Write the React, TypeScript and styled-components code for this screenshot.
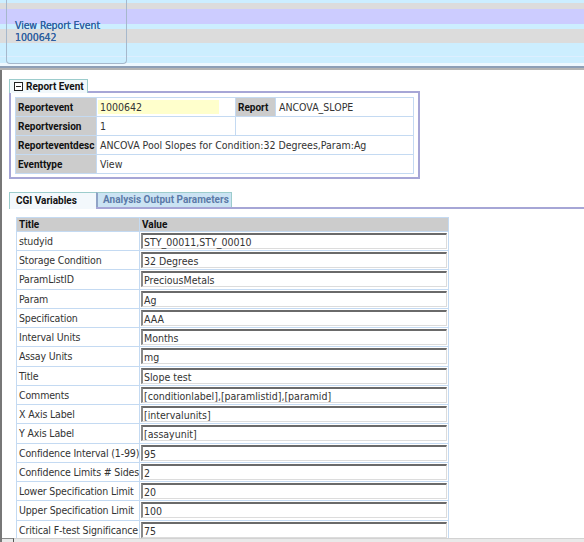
import React from 'react';
import styled, { createGlobalStyle, css } from 'styled-components';

const GlobalStyle = createGlobalStyle`
  html, body {
    margin: 0;
    padding: 0;
    background: #ffffff;
  }
  body {
    font-family: "DejaVu Sans Condensed", "DejaVu Sans", sans-serif;
    font-size: 10.5px;
    color: #333333;
  }
  * {
    box-sizing: border-box;
  }
`;

const LAVENDER = '#a6a6d6';
const TEAL = '#9ccccc';
const GRIDLINE = '#c4daf2';

// narrower bold face, close to the Tahoma Bold labels
const strong = css`
  font-family: Roboto, "DejaVu Sans Condensed", sans-serif;
  font-weight: bold;
  font-size: 10px;
  white-space: nowrap;
`;

const Page = styled.div`
  width: 584px;
  height: 542px;
  overflow: hidden;
  display: flex;
  flex-direction: column;
`;

const BannerFrame = styled.div`
  flex: none;
  border-bottom: 2px solid #b4b4b4;
`;

const Banner = styled.div`
  height: 68px;
  padding-left: 6px;
  border-bottom: 2px solid #8d9fb7;
  background: linear-gradient(
    to bottom,
    #cceeff 0 3px,
    #dcdcdc 3px 9px,
    #ccccff 9px 24px,
    #cceeff 24px 29px,
    #dcdcdc 29px 43px,
    #cceeff 43px 56px,
    #ddeeff 56px 57px,
    #cceeff 57px 63px,
    #eef8ff 63px 66px
  );
`;

const BannerBox = styled.div`
  width: 121px;
  height: 64px;
  padding: 19px 0 0 8px;
  border: 1px solid #a6b8cc;
  border-top: none;
  border-radius: 0 0 4px 4px;
  color: #2f5f9f;
  line-height: 12px;
  letter-spacing: -0.1px;
  text-shadow: 0 0 0.4px #2f5f9f;
`;

const Main = styled.div`
  flex: 1;
  min-height: 0;
  display: flex;
  flex-direction: column;
  border-left: 2px solid #777777;
`;

const Content = styled.div`
  flex: 1;
  min-height: 0;
  overflow: hidden;
  padding: 9px 0 0 7px;
`;

const Panel = styled.div`
  width: 411px;
`;

const TabRow = styled.div`
  display: flex;
  height: 14px;
`;

const SectionTab = styled.div`
  ${strong};
  display: flex;
  align-items: center;
  gap: 3px;
  width: 79px;
  padding-left: 4px;
  border: 1px solid ${TEAL};
  border-bottom: none;
  background: #f1f8fb;
  color: #111111;
`;

const CollapseIcon = styled.span`
  position: relative;
  flex: none;
  width: 9px;
  height: 9px;
  border: 1px solid #222222;
  background: #ffffff;
  &::after {
    content: '';
    position: absolute;
    left: 1px;
    right: 1px;
    top: 3px;
    height: 1px;
    background: #222222;
  }
`;

const TabRule = styled.div`
  flex: 1;
  border-bottom: 2px solid ${LAVENDER};
`;

const PanelBody = styled.div`
  border: 2px solid ${LAVENDER};
  border-top: none;
  padding: 4px 4px 3px 4px;
`;

const InfoGrid = styled.div`
  display: grid;
  grid-template-columns: 80px 138px 39px 1fr;
  grid-auto-rows: 18px;
  gap: 1px;
  background: ${GRIDLINE};
  border: 1px solid ${GRIDLINE};
`;

const InfoLabel = styled.div`
  ${strong};
  display: flex;
  align-items: center;
  padding-left: 2px;
  background: #cccccc;
  color: #111111;
`;

const InfoValue = styled.div<{ $span?: number }>`
  display: flex;
  align-items: center;
  padding-left: 3px;
  background: #ffffff;
  white-space: nowrap;
  grid-column: span ${(p) => p.$span ?? 1};
`;

const YellowField = styled.div`
  width: 121px;
  height: 14px;
  margin-left: -2px;
  padding-left: 2px;
  background: #ffffcc;
  line-height: 14px;
`;

const Variables = styled.div`
  margin-top: 13px;
`;

const TabStrip = styled.div`
  display: flex;
  align-items: flex-end;
  height: 17px;
  border-bottom: 2px solid ${LAVENDER};
`;

const ActiveTab = styled.div`
  ${strong};
  position: relative;
  width: 87px;
  height: 17px;
  margin-bottom: -2px;
  padding: 2px 0 0 6px;
  border-top: 1px solid ${TEAL};
  border-left: 1px solid ${TEAL};
  background: #f3f8fc;
  color: #111111;
`;

const IdleTab = styled.div`
  ${strong};
  align-self: flex-start;
  width: 136px;
  height: 15px;
  padding: 1px 0 0 5px;
  border-top: 1px solid ${TEAL};
  border-left: 2px solid #8fa3c6;
  border-right: 1px solid ${TEAL};
  background: #cbe3f3;
  color: #5b7aa8;
`;

// rows repeat every ~19.25px in the original; spread the extra pixel
// over every fourth row so text stays on whole pixels
const VarGrid = styled.div`
  width: 433px;
  margin: 8px 0 0 7px;
  display: grid;
  grid-template-columns: 122px 1fr;
  grid-template-rows: 13px repeat(4, 18px 18px 19px 18px);
  gap: 1px;
  background: ${GRIDLINE};
  border: 1px solid ${GRIDLINE};
`;

const HeadCell = styled.div`
  ${strong};
  padding-left: 2px;
  background: #cccccc;
  color: #111111;
  line-height: 13px;
`;

const VarTitle = styled.div`
  padding: 0 2px;
  background: #ffffff;
  line-height: 18px;
  letter-spacing: -0.15px;
  white-space: nowrap;
  overflow: hidden;
`;

const VarValue = styled.div`
  padding: 1px;
  background: #ffffff;
`;

// read-only text box with the classic inset border
const Field = styled.div`
  height: 16px;
  padding: 1px 0 0 1px;
  border-style: solid;
  border-width: 2px 1px 1px 2px;
  border-color: #6a6a6a #dcdcdc #dcdcdc #8a8a8a;
  background: #ffffff;
  line-height: 12px;
  white-space: nowrap;
`;

const ScrollTrack = styled.div`
  flex: none;
  display: flex;
  height: 4px;
  background: #e9e9e9;
  border-top: 1px solid #d2d2d2;
`;

const ScrollButton = styled.div`
  width: 12px;
  margin-top: -1px;
  border-top: 1px solid #8a8a8a;
  border-right: 1px solid #555555;
`;

const variables: [string, string][] = [
  ['studyid', 'STY_00011,STY_00010'],
  ['Storage Condition', '32 Degrees'],
  ['ParamListID', 'PreciousMetals'],
  ['Param', 'Ag'],
  ['Specification', 'AAA'],
  ['Interval Units', 'Months'],
  ['Assay Units', 'mg'],
  ['Title', 'Slope test'],
  ['Comments', '[conditionlabel],[paramlistid],[paramid]'],
  ['X Axis Label', '[intervalunits]'],
  ['Y Axis Label', '[assayunit]'],
  ['Confidence Interval (1-99)', '95'],
  ['Confidence Limits # Sides', '2'],
  ['Lower Specification Limit', '20'],
  ['Upper Specification Limit', '100'],
  ['Critical F-test Significance', '75'],
];

const App = () => {
  return (
    <Page>
      <GlobalStyle />
      <BannerFrame>
        <Banner>
          <BannerBox>
            View Report Event
            <br />
            1000642
          </BannerBox>
        </Banner>
      </BannerFrame>

      <Main>
        <Content>
          <Panel>
            <TabRow>
              <SectionTab>
                <CollapseIcon />
                Report Event
              </SectionTab>
              <TabRule />
            </TabRow>
            <PanelBody>
              <InfoGrid>
                <InfoLabel>Reportevent</InfoLabel>
                <InfoValue>
                  <YellowField>1000642</YellowField>
                </InfoValue>
                <InfoLabel>Report</InfoLabel>
                <InfoValue>ANCOVA_SLOPE</InfoValue>

                <InfoLabel>Reportversion</InfoLabel>
                <InfoValue>1</InfoValue>
                <InfoValue $span={2} />

                <InfoLabel>Reporteventdesc</InfoLabel>
                <InfoValue $span={3}>
                  ANCOVA Pool Slopes for Condition:32 Degrees,Param:Ag
                </InfoValue>

                <InfoLabel>Eventtype</InfoLabel>
                <InfoValue $span={3}>View</InfoValue>
              </InfoGrid>
            </PanelBody>
          </Panel>

          <Variables>
            <TabStrip>
              <ActiveTab>CGI Variables</ActiveTab>
              <IdleTab>Analysis Output Parameters</IdleTab>
            </TabStrip>
            <VarGrid>
              <HeadCell>Title</HeadCell>
              <HeadCell>Value</HeadCell>
              {variables.map(([title, value]) => (
                <React.Fragment key={title}>
                  <VarTitle>{title}</VarTitle>
                  <VarValue>
                    <Field>{value}</Field>
                  </VarValue>
                </React.Fragment>
              ))}
            </VarGrid>
          </Variables>
        </Content>
        <ScrollTrack>
          <ScrollButton />
        </ScrollTrack>
      </Main>
    </Page>
  );
};

export default App;
